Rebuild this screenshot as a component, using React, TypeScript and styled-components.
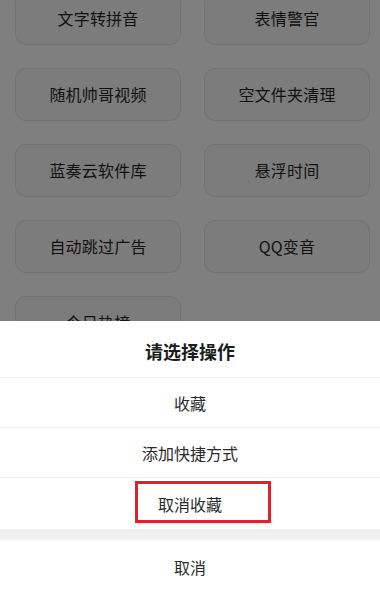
import React from "react";
import styled, { createGlobalStyle } from "styled-components";

const Global = createGlobalStyle`
  html, body { margin: 0; padding: 0; background: #7f7f7f; overflow: hidden; }
  * { box-sizing: border-box; }
`;

const Screen = styled.div`
  position: relative;
  width: 380px;
  height: 592px;
  overflow: hidden;
  background: #7f7f7f;
  font-family: "Noto Sans CJK SC", "Noto Sans", sans-serif;
`;

const Grid = styled.div`
  display: grid;
  grid-template-columns: 166px 166px;
  column-gap: 23px;
  row-gap: 23px;
  padding: 0 10px 0 15px;
  margin-top: -8px;
`;

const Tile = styled.div`
  height: 53px;
  border-radius: 11px;
  background: #7c7c7c;
  border: 1px solid #737373;
  display: flex;
  align-items: center;
  justify-content: center;
  font-size: 16px;
  color: #111;
  letter-spacing: 0.2px;
  padding-bottom: 2px;
`;

const Sheet = styled.div`
  position: absolute;
  left: 0;
  right: 0;
  top: 321px;
  bottom: 0;
  background: #fff;
  display: flex;
  flex-direction: column;
`;

const Title = styled.div`
  flex: none;
  height: 57px;
  display: flex;
  align-items: center;
  justify-content: center;
  font-size: 18px;
  font-weight: 700;
  color: #1c1c1c;
  border-bottom: 1px solid #efefef;
  padding-top: 4px;
`;

const Item = styled.div<{ $last?: boolean }>`
  flex: none;
  position: relative;
  height: ${(p) => (p.$last ? "51px" : "50px")};
  display: flex;
  align-items: center;
  justify-content: center;
  font-size: 16px;
  color: #2a2a2a;
  border-bottom: ${(p) => (p.$last ? "none" : "1px solid #efefef")};
`;

const Band = styled.div`
  flex: none;
  height: 11px;
  background: #f0f0f0;
`;

const Cancel = styled.div`
  flex: none;
  height: 54px;
  display: flex;
  align-items: center;
  justify-content: center;
  font-size: 16px;
  color: #2a2a2a;
`;

const Highlight = styled.div`
  position: absolute;
  left: 135px;
  top: 3px;
  width: 136px;
  height: 42px;
  border: 3px solid #e3202a;
`;

const tiles = [
  "文字转拼音",
  "表情警官",
  "随机帅哥视频",
  "空文件夹清理",
  "蓝奏云软件库",
  "悬浮时间",
  "自动跳过广告",
  "QQ变音",
  "今日热榜",
];

export default function App() {
  return (
    <Screen>
      <Global />
      <Grid>
        {tiles.map((t) => (
          <Tile key={t}>{t}</Tile>
        ))}
      </Grid>
      <Sheet>
        <Title>请选择操作</Title>
        <Item>收藏</Item>
        <Item>添加快捷方式</Item>
        <Item $last>
          取消收藏
          <Highlight />
        </Item>
        <Band />
        <Cancel>取消</Cancel>
      </Sheet>
    </Screen>
  );
}
